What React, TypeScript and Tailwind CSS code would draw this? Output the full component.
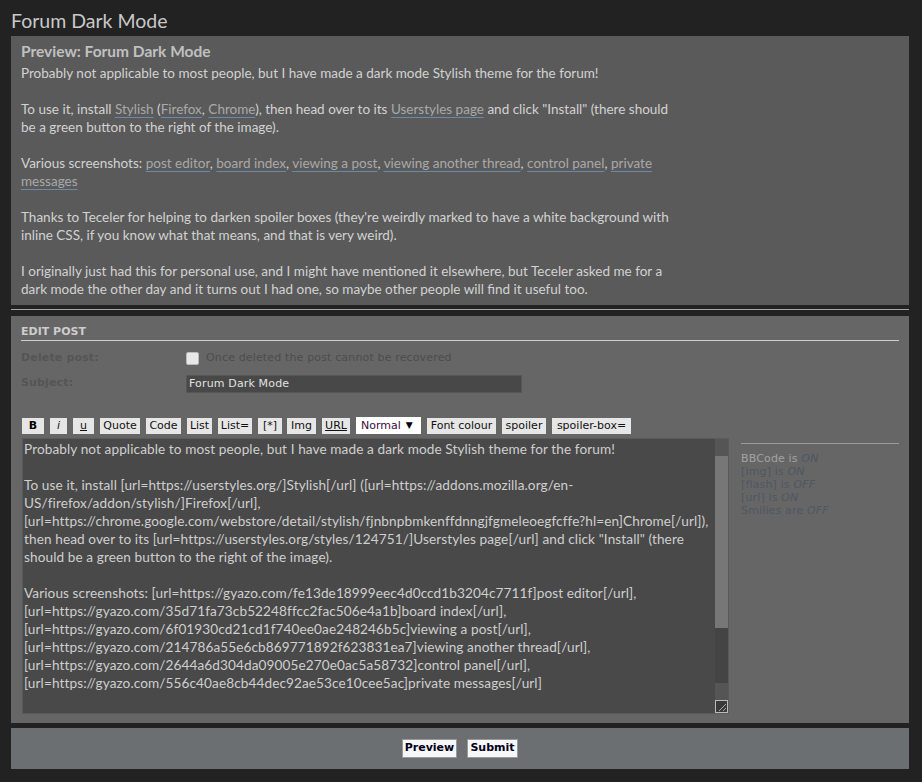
import React from "react";

const trebuchet = { fontFamily: "Lato, 'Open Sans', sans-serif" };
const verdana = { fontFamily: "'DejaVu Sans', Verdana, sans-serif" };

function L({ children }: { children: React.ReactNode }) {
  return (
    <span className="text-[#a9a9a9] underline decoration-[#6a89ab] underline-offset-[3px]">
      {children}
    </span>
  );
}

const taLines = [
  "Probably not applicable to most people, but I have made a dark mode Stylish theme for the forum!",
  "",
  "To use it, install [url=https://userstyles.org/]Stylish[/url] ([url=https://addons.mozilla.org/en-",
  "US/firefox/addon/stylish/]Firefox[/url],",
  "[url=https://chrome.google.com/webstore/detail/stylish/fjnbnpbmkenffdnngjfgmeleoegfcffe?hl=en]Chrome[/url]),",
  'then head over to its [url=https://userstyles.org/styles/124751/]Userstyles page[/url] and click "Install" (there',
  "should be a green button to the right of the image).",
  "",
  "Various screenshots: [url=https://gyazo.com/fe13de18999eec4d0ccd1b3204c7711f]post editor[/url],",
  "[url=https://gyazo.com/35d71fa73cb52248ffcc2fac506e4a1b]board index[/url],",
  "[url=https://gyazo.com/6f01930cd21cd1f740ee0ae248246b5c]viewing a post[/url],",
  "[url=https://gyazo.com/214786a55e6cb869771892f623831ea7]viewing another thread[/url],",
  "[url=https://gyazo.com/2644a6d304da09005e270e0ac5a58732]control panel[/url],",
  "[url=https://gyazo.com/556c40ae8cb44dec92ae53ce10cee5ac]private messages[/url]",
];

function Btn({ children, className = "" }: { children: React.ReactNode; className?: string }) {
  return (
    <span
      className={
        "flex h-[16px] items-center justify-center bg-[#e6e6e6] text-[11px] leading-none text-[#111] " +
        className
      }
    >
      {children}
    </span>
  );
}

export default function App() {
  return (
    <div className="min-h-[782px] w-[922px] bg-[#222] pl-[11px] pr-[13px] pt-[8px] pb-[13px]">
      <h2 className="h-[28px] text-[19.5px] leading-[26px] text-[#c9c9c9]" style={trebuchet}>
        Forum Dark Mode
      </h2>

      {/* Preview */}
      <div className="bg-[#5a5a5a] px-[10px] pt-[6px] pb-[7px]" style={trebuchet}>
        <h3 className="mb-[4px] text-[15.5px] font-bold leading-[18px] text-[#c0c0c0]">
          Preview: Forum Dark Mode
        </h3>
        <div className="whitespace-nowrap text-[13.5px] leading-[18px] text-[#d2d2d2]">
          <div>Probably not applicable to most people, but I have made a dark mode Stylish theme for the forum!</div>
          <div className="h-[18px]" />
          <div>
            To use it, install <L>Stylish</L> (<L>Firefox</L>, <L>Chrome</L>), then head over to its{" "}
            <L>Userstyles page</L> and click "Install" (there should
          </div>
          <div>be a green button to the right of the image).</div>
          <div className="h-[18px]" />
          <div>
            Various screenshots: <L>post editor</L>, <L>board index</L>, <L>viewing a post</L>,{" "}
            <L>viewing another thread</L>, <L>control panel</L>, <L>private</L>
          </div>
          <div>
            <L>messages</L>
          </div>
          <div className="h-[18px]" />
          <div>
            Thanks to Teceler for helping to darken spoiler boxes (they're weirdly marked to have a white background with
          </div>
          <div>inline CSS, if you know what that means, and that is very weird).</div>
          <div className="h-[18px]" />
          <div>
            I originally just had this for personal use, and I might have mentioned it elsewhere, but Teceler asked me for a
          </div>
          <div>dark mode the other day and it turns out I had one, so maybe other people will find it useful too.</div>
        </div>
      </div>

      <div className="mt-[4px] h-px bg-[#a5a5a5]" />

      {/* Edit post */}
      <div className="mt-[6px] bg-[#666] px-[10px] pt-[9px] pb-[9px]" style={verdana}>
        <div className="border-b border-[#cfcfcf] pb-[1px] text-[11px] font-bold leading-[14px] text-[#cdcdcd]">
          EDIT POST
        </div>

        <div className="mt-[10px] flex h-[14px] items-center text-[11px] tracking-[0.15px]">
          <span className="w-[165px] font-bold text-[#555]">Delete post:</span>
          <span className="h-[13px] w-[13px] rounded-[2px] border border-[#bbb] bg-[#e8e8e8]" />
          <span className="ml-[7px] text-[#4d4d4d]">Once deleted the post cannot be recovered</span>
        </div>

        <div className="mt-[10px] flex text-[11px] tracking-[0.15px]">
          <span className="w-[165px] pt-[1px] font-bold leading-[14px] text-[#555]">Subject:</span>
          <div className="flex h-[18px] w-[336px] items-center border border-[#575757] bg-[#484848] pl-[2px] text-[#e2e2e2]">
            Forum Dark Mode
          </div>
        </div>

        {/* toolbar */}
        <div className="mt-[24px] flex items-center">
          <Btn className="ml-[1px] w-[22px] font-bold text-black">B</Btn>
          <Btn className="ml-[6px] w-[17px] italic">i</Btn>
          <Btn className="ml-[6px] w-[21px] underline">u</Btn>
          <Btn className="ml-[6px] w-[40px]">Quote</Btn>
          <Btn className="ml-[6px] w-[35px]">Code</Btn>
          <Btn className="ml-[6px] w-[25px]">List</Btn>
          <Btn className="ml-[6px] w-[34px] text-[#2a0a2a]">List=</Btn>
          <Btn className="ml-[6px] w-[24px] text-[#3a0a0a]">[*]</Btn>
          <Btn className="ml-[5px] w-[29px] text-[#0a0a2a]">Img</Btn>
          <Btn className="ml-[6px] w-[28px] underline">URL</Btn>
          <span className="ml-[6px] flex h-[17px] w-[65px] items-center bg-white pl-[5px] text-[11px] leading-none text-[#3c0a3c]">
            Normal<span className="ml-[5px] text-[9px] text-black">▼</span>
          </span>
          <Btn className="ml-[6px] w-[69px]">Font colour</Btn>
          <Btn className="ml-[6px] w-[44px] text-[#1a0a1a]">spoiler</Btn>
          <Btn className="ml-[6px] w-[79px] text-[#1a0a1a]">spoiler-box=</Btn>
        </div>

        <div className="mt-[4px] flex">
          {/* textarea */}
          <div className="ml-[1px] flex h-[276px] w-[707px] border border-[#5a5a5a] bg-[#494949]">
            <div
              className="flex-1 overflow-hidden whitespace-nowrap pl-[1px] pt-[1px] text-[13.6px] leading-[18px] tracking-[0.1px] text-[#cfcfcf]"
              style={trebuchet}
            >
              {taLines.map((t, i) => (
                <div key={i} className="h-[18px]">
                  {t}
                </div>
              ))}
            </div>
            <div className="flex w-[13px] flex-col">
              <div className="h-[17px] bg-[#555]" />
              <div className="h-[172px] bg-[#777]" />
              <div className="flex-1 bg-[#444]" />
              <div className="h-[17px] bg-[#555]" />
              <div className="flex h-[13px] items-end justify-end border border-[#bbb] bg-[#3a3a3a]">
                <svg width="11" height="11" viewBox="0 0 11 11">
                  <line x1="10" y1="3" x2="3" y2="10" stroke="#aaa" strokeWidth="1" />
                  <line x1="10" y1="7" x2="7" y2="10" stroke="#aaa" strokeWidth="1" />
                </svg>
              </div>
            </div>
          </div>

          {/* right column */}
          <div className="ml-[12px] mt-[5px] flex-1 self-start border-t border-[#9a9a9a] pt-[8px] text-[11px] leading-[13px] tracking-[0.15px]">
            <div>
              <span className="text-[#a3a3a3]">BBCode is </span>
              <i className="text-[#4d5663]">ON</i>
            </div>
            <div className="text-[#4f5762]">
              [img] is <i>ON</i>
            </div>
            <div className="text-[#4f5762]">
              [flash] is <i>OFF</i>
            </div>
            <div className="text-[#4f5762]">
              [url] is <i>ON</i>
            </div>
            <div className="text-[#4f5762]">
              Smilies are <i>OFF</i>
            </div>
          </div>
        </div>
      </div>

      {/* bottom buttons */}
      <div className="mt-[5px] flex h-[41px] items-center justify-center gap-[10px] bg-[#6c6f71]" style={verdana}>
        <span className="flex h-[19px] w-[55px] items-center justify-center border border-[#999] bg-[#f7f7f7] text-[11px] font-bold text-[#00001a]">
          Preview
        </span>
        <span className="flex h-[19px] w-[51px] items-center justify-center border border-[#999] bg-[#f7f7f7] text-[11px] font-bold text-[#00001a]">
          Submit
        </span>
      </div>
    </div>
  );
}
